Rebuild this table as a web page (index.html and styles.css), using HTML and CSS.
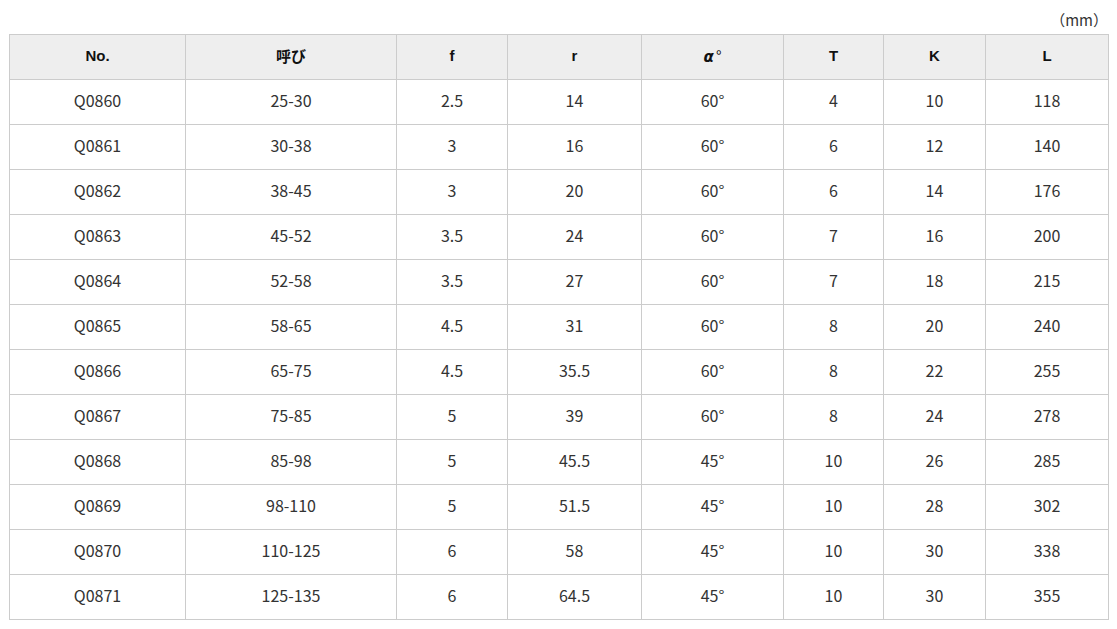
FILE: index.html
```html
<!DOCTYPE html>
<html lang="ja">
<head>
<meta charset="utf-8">
<link rel="stylesheet" href="styles.css">
</head>
<body>
<div class="wrap">
  <p class="unit">（mm）</p>
  <table class="spec">
    <colgroup>
      <col class="c1"><col class="c2"><col class="c3"><col class="c4"><col class="c5"><col class="c6"><col class="c7"><col class="c8">
    </colgroup>
    <thead>
      <tr><th>No.</th><th>呼び</th><th>f</th><th>r</th><th><span class="alpha">α</span><span class="deg">°</span></th><th>T</th><th>K</th><th>L</th></tr>
    </thead>
    <tbody>
      <tr><td>Q0860</td><td>25-30</td><td>2.5</td><td>14</td><td>60°</td><td>4</td><td>10</td><td>118</td></tr>
      <tr><td>Q0861</td><td>30-38</td><td>3</td><td>16</td><td>60°</td><td>6</td><td>12</td><td>140</td></tr>
      <tr><td>Q0862</td><td>38-45</td><td>3</td><td>20</td><td>60°</td><td>6</td><td>14</td><td>176</td></tr>
      <tr><td>Q0863</td><td>45-52</td><td>3.5</td><td>24</td><td>60°</td><td>7</td><td>16</td><td>200</td></tr>
      <tr><td>Q0864</td><td>52-58</td><td>3.5</td><td>27</td><td>60°</td><td>7</td><td>18</td><td>215</td></tr>
      <tr><td>Q0865</td><td>58-65</td><td>4.5</td><td>31</td><td>60°</td><td>8</td><td>20</td><td>240</td></tr>
      <tr><td>Q0866</td><td>65-75</td><td>4.5</td><td>35.5</td><td>60°</td><td>8</td><td>22</td><td>255</td></tr>
      <tr><td>Q0867</td><td>75-85</td><td>5</td><td>39</td><td>60°</td><td>8</td><td>24</td><td>278</td></tr>
      <tr><td>Q0868</td><td>85-98</td><td>5</td><td>45.5</td><td>45°</td><td>10</td><td>26</td><td>285</td></tr>
      <tr><td>Q0869</td><td>98-110</td><td>5</td><td>51.5</td><td>45°</td><td>10</td><td>28</td><td>302</td></tr>
      <tr><td>Q0870</td><td>110-125</td><td>6</td><td>58</td><td>45°</td><td>10</td><td>30</td><td>338</td></tr>
      <tr><td>Q0871</td><td>125-135</td><td>6</td><td>64.5</td><td>45°</td><td>10</td><td>30</td><td>355</td></tr>
    </tbody>
  </table>
</div>
</body>
</html>
```
FILE: styles.css
```css
html, body {
  margin: 0;
  padding: 0;
  background: #fff;
}
.wrap {
  padding: 0 9px 0 9px;
  font-family: "Noto Sans CJK JP", "Noto Sans", sans-serif;
  color: #333;
}
.unit {
  margin: 0;
  height: 34px;
  line-height: 40px;
  text-align: right;
  font-size: 15px;
  padding-right: 0;
  box-sizing: border-box;
}
.spec {
  border-collapse: collapse;
  table-layout: fixed;
  width: 1099px;
}
.c1 { width: 176px; }
.c2 { width: 211px; }
.c3 { width: 111px; }
.c4 { width: 134px; }
.c5 { width: 142px; }
.c6 { width: 100px; }
.c7 { width: 102px; }
.c8 { width: 123px; }
.spec th, .spec td {
  border: 1px solid #ccc;
  text-align: center;
  vertical-align: middle;
}
.spec th {
  height: 41px;
  padding: 0 0 3px 0;
  background: #eee;
  font-family: "Liberation Sans", Arial, "Noto Sans CJK JP", sans-serif;
  font-weight: bold;
  font-size: 15px;
  color: #111;
}
.spec th .alpha {
  font-style: italic;
  font-family: "DejaVu Sans", sans-serif;
  font-size: 15px;
}
.spec th .deg {
  font-family: "Noto Sans CJK JP", sans-serif;
  font-weight: normal;
  margin-left: 2px;
}
.spec td {
  height: 39px;
  padding: 0 0 5px 0;
  font-size: 16px;
  color: #333;
}
```
